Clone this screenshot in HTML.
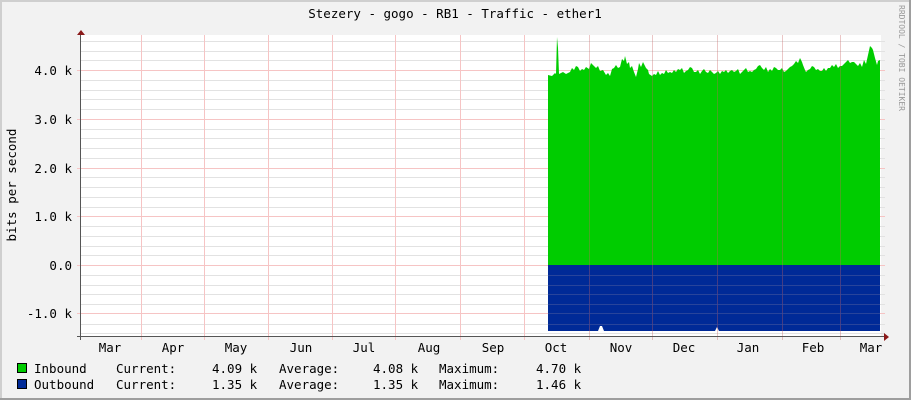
<!DOCTYPE html>
<html><head><meta charset="utf-8"><style>
html,body{margin:0;padding:0;background:#f2f2f2}
svg{display:block}
text{font-family:"DejaVu Sans Mono","Liberation Mono",monospace;fill:#000}
</style></head><body>
<svg width="911" height="400" xmlns="http://www.w3.org/2000/svg">
<rect x="0" y="0" width="911" height="400" fill="#f2f2f2"/>
<rect x="0" y="0" width="911" height="2" fill="#cfcfcf"/>
<rect x="0" y="0" width="2" height="400" fill="#cfcfcf"/>
<rect x="909" y="0" width="2" height="400" fill="#9e9e9e"/>
<rect x="0" y="398" width="911" height="2" fill="#9e9e9e"/>
<rect x="81" y="35" width="800" height="301" fill="#fff"/>
<g fill="#e2e2e2">
<rect x="81" y="41" width="804" height="1"/><rect x="81" y="51" width="804" height="1"/><rect x="81" y="60" width="804" height="1"/>
<rect x="81" y="80" width="804" height="1"/><rect x="81" y="90" width="804" height="1"/><rect x="81" y="99" width="804" height="1"/><rect x="81" y="109" width="804" height="1"/>
<rect x="81" y="129" width="804" height="1"/><rect x="81" y="138" width="804" height="1"/><rect x="81" y="148" width="804" height="1"/><rect x="81" y="158" width="804" height="1"/>
<rect x="81" y="177" width="804" height="1"/><rect x="81" y="187" width="804" height="1"/><rect x="81" y="197" width="804" height="1"/><rect x="81" y="207" width="804" height="1"/>
<rect x="81" y="226" width="804" height="1"/><rect x="81" y="236" width="804" height="1"/><rect x="81" y="246" width="804" height="1"/><rect x="81" y="255" width="804" height="1"/>
<rect x="81" y="275" width="804" height="1"/><rect x="81" y="285" width="804" height="1"/><rect x="81" y="294" width="804" height="1"/><rect x="81" y="304" width="804" height="1"/>
<rect x="81" y="324" width="804" height="1"/><rect x="81" y="333" width="804" height="1"/>
</g>
<g fill="#f6c4c4">
<rect x="77" y="70" width="808" height="1"/><rect x="77" y="119" width="808" height="1"/><rect x="77" y="168" width="808" height="1"/><rect x="77" y="216" width="808" height="1"/><rect x="77" y="265" width="808" height="1"/><rect x="77" y="313" width="808" height="1"/>
<rect x="141" y="35" width="1" height="305"/><rect x="204" y="35" width="1" height="305"/><rect x="268" y="35" width="1" height="305"/><rect x="332" y="35" width="1" height="305"/><rect x="395" y="35" width="1" height="305"/><rect x="460" y="35" width="1" height="305"/><rect x="524" y="35" width="1" height="305"/>
</g>
<path fill="#00cc00" d="M548,265 L548,75 552,76 555,73 556,74 557,37 558,48 559,74 563,72 566,74 570,72 572,68 574,70 576,66 578,67 580,71 582,69 584,70 586,67 589,69 591,63 594,66 596,68 598,66 600,71 603,70 606,75 608,73 610,76 612,69 614,68 616,65 618,68 620,67 622,59 624,61 625,56 627,64 629,62 630,68 632,66 634,72 636,77 638,69 639,63 641,67 643,62 645,66 646,68 648,70 649,74 652,76 654,74 656,75 658,71 660,75 662,73 664,74 666,70 668,73 670,72 672,73 674,70 676,72 678,69 680,70 682,68 684,73 686,71 688,70 690,67 692,68 694,72 696,72 698,70 700,74 702,71 704,69 706,72 708,73 710,70 712,72 714,74 716,73 718,71 720,74 722,71 724,72 726,70 728,73 730,71 732,70 734,72 736,71 738,69 740,74 742,72 744,70 746,68 748,72 750,71 752,72 754,70 756,69 758,66 760,65 762,68 764,70 766,67 768,72 770,69 772,71 774,67 776,68 778,70 780,70 782,68 784,72 786,71 788,69 790,67 792,66 794,64 796,61 798,63 800,58 802,62 803,65 805,70 806,72 808,70 810,69 812,66 814,67 816,70 818,69 820,71 822,71 824,68 826,71 828,68 830,68 832,65 834,67 836,64 838,68 840,66 842,66 844,64 846,62 848,60 850,63 852,62 854,62 856,64 858,66 860,63 862,67 864,60 866,64 868,55 870,46 872,48 873,50 875,58 877,65 878,61 880,60 880,265 Z"/>
<rect x="548" y="265" width="332" height="66" fill="#002a97"/>
<path fill="#fff" d="M598,331 L600,326 602,326 604,331Z M715,331 L717,327 719,331Z"/>
<g fill="#c86060" opacity="0.35">
<rect x="589" y="35" width="1" height="305"/><rect x="652" y="35" width="1" height="305"/><rect x="717" y="35" width="1" height="305"/><rect x="782" y="35" width="1" height="305"/><rect x="840" y="35" width="1" height="305"/>
</g>
<g fill="#3a4f9e" opacity="0.7">
<rect x="548" y="275" width="332" height="1"/><rect x="548" y="285" width="332" height="1"/><rect x="548" y="294" width="332" height="1"/><rect x="548" y="304" width="332" height="1"/><rect x="548" y="313" width="332" height="1"/><rect x="548" y="324" width="332" height="1"/>
</g>
<g fill="#555">
<rect x="80" y="32" width="1" height="308"/>
<rect x="77" y="336" width="808" height="1"/>
</g>
<path d="M77,35 L81,30 L85,35Z" fill="#8b1a1a"/>
<path d="M884,333 L889,337 L884,341Z" fill="#8b1a1a"/>
<text x="455" y="18" font-size="12.5" text-anchor="middle">Stezery - gogo - RB1 - Traffic - ether1</text>
<g font-size="12.5" text-anchor="end">
<text x="72" y="75">4.0 k</text><text x="72" y="124">3.0 k</text><text x="72" y="173">2.0 k</text><text x="72" y="221">1.0 k</text><text x="72" y="270">0.0</text><text x="72" y="318">-1.0 k</text>
</g>
<text transform="translate(16,185) rotate(-90)" font-size="12.5" text-anchor="middle">bits per second</text>
<text transform="translate(899,5) rotate(90)" font-size="8" style="fill:#999">RRDTOOL / TOBI OETIKER</text>
<g font-size="12.5" text-anchor="middle">
<text x="110" y="352">Mar</text><text x="173" y="352">Apr</text><text x="236" y="352">May</text><text x="301" y="352">Jun</text><text x="364" y="352">Jul</text><text x="429" y="352">Aug</text><text x="493" y="352">Sep</text><text x="556" y="352">Oct</text><text x="621" y="352">Nov</text><text x="684" y="352">Dec</text><text x="748" y="352">Jan</text><text x="813" y="352">Feb</text><text x="871" y="352">Mar</text>
</g>
<rect x="17.5" y="363.5" width="9" height="9" fill="#00cc00" stroke="#000"/>
<rect x="17.5" y="379.5" width="9" height="9" fill="#002a97" stroke="#000"/>
<g font-size="12.5">
<text x="34" y="373">Inbound</text><text x="116" y="373">Current:</text><text x="212" y="373">4.09 k</text><text x="279" y="373">Average:</text><text x="373" y="373">4.08 k</text><text x="439" y="373">Maximum:</text><text x="536" y="373">4.70 k</text>
<text x="34" y="389">Outbound</text><text x="116" y="389">Current:</text><text x="212" y="389">1.35 k</text><text x="279" y="389">Average:</text><text x="373" y="389">1.35 k</text><text x="439" y="389">Maximum:</text><text x="536" y="389">1.46 k</text>
</g>
</svg>
</body></html>
